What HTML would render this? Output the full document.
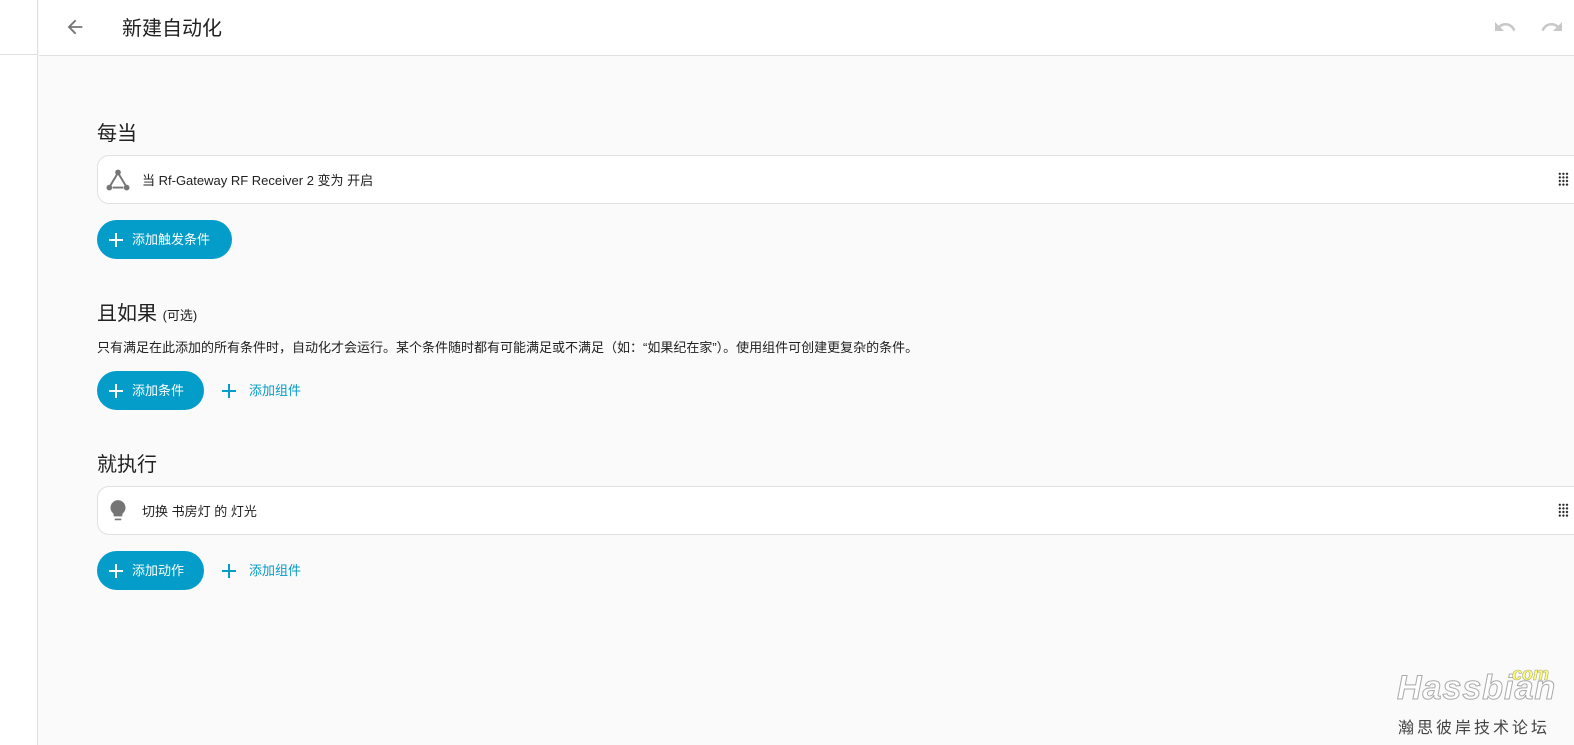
<!DOCTYPE html>
<html><head><meta charset="utf-8"><style>
*{box-sizing:border-box;margin:0;padding:0}
body{width:1574px;height:745px;overflow:hidden;background:#fafafa;font-family:"Liberation Sans","Noto Sans CJK SC",sans-serif;color:#212121;position:relative}
.side{position:absolute;left:0;top:0;width:38px;height:745px;background:#fff;border-right:1px solid #e0e0e0}
.side:after{content:"";position:absolute;left:0;top:54px;width:38px;height:1px;background:#e0e0e0}
.hdr{position:absolute;left:39px;top:0;right:0;height:56px;background:#fff;border-bottom:1px solid #e0e0e0}
.title{position:absolute;left:83px;top:12px;font-size:20px;color:#212121}
.h{position:absolute;left:97px;font-size:20px;color:#212121}
.h small{font-size:13px}
.card{position:absolute;left:97px;width:1490px;height:49px;background:#fff;border:1px solid #e0e0e0;border-radius:12px}
.card .t{position:absolute;left:44px;top:14px;font-size:13px;color:#212121}
.btn{position:absolute;left:97px;height:39px;border-radius:20px;background:#049cc8;color:#fff;font-size:13px;line-height:39px;padding-left:35px}
.btn:before,.lnk:before{content:"";position:absolute;left:12px;top:19px;width:14px;height:2px;background:currentColor}
.btn:after,.lnk:after{content:"";position:absolute;left:18px;top:13px;width:2px;height:14px;background:currentColor}
.lnk{position:absolute;color:#049cc8;font-size:13px;height:39px;line-height:39px;padding-left:27px}
.lnk:before{left:0}.lnk:after{left:6px}
.grip{position:absolute;right:17px;top:16px;width:11px;height:14px;background-image:radial-gradient(circle,#222 1px,transparent 1.3px);background-size:3.6px 3.6px}
</style></head><body>
<div class="side"></div>
<div class="hdr">
<svg style="position:absolute;left:25px;top:16px" width="22" height="22" viewBox="0 0 24 24"><path d="M20 11H7.8l5.6-5.6L12 4l-8 8 8 8 1.4-1.4L7.8 13H20z" fill="#757575"/></svg>
<div class="title">新建自动化</div>
<svg style="position:absolute;left:1454px;top:15px" width="24" height="24" viewBox="0 0 24 24"><path d="M12.5 8c-2.65 0-5.05 1-6.9 2.6L2 7v9h9l-3.6-3.6c1.4-1.2 3.2-1.9 5.1-1.9 3.5 0 6.5 2.3 7.6 5.5l2.4-.8C21.1 11 17.2 8 12.5 8z" fill="#c8c8c8"/></svg>
<svg style="position:absolute;left:1501px;top:15px" width="24" height="24" viewBox="0 0 24 24"><path d="M18.4 10.6C16.6 9 14.2 8 11.5 8c-4.7 0-8.6 3-10 7.2l2.4.8c1.1-3.2 4.1-5.5 7.6-5.5 2 0 3.7.7 5.1 1.9L13 16h9V7z" fill="#c8c8c8"/></svg>
</div>
<div class="h" style="top:117px">每当</div>
<div class="card" style="top:155px">
<svg style="position:absolute;left:7px;top:11px" width="26" height="26" viewBox="0 0 24 24"><g fill="#757575"><circle cx="12" cy="5" r="2.6"/><circle cx="4" cy="19" r="2.6"/><circle cx="20" cy="19" r="2.6"/></g><path d="M11 7l-6 10M13 7l6 10M7 19h10" stroke="#757575" stroke-width="1.8" fill="none"/></svg>
<div class="t">当 Rf-Gateway RF Receiver 2 变为 开启</div><div class="grip"></div></div>
<div class="btn" style="top:220px;width:135px">添加触发条件</div>
<div class="h" style="top:297px">且如果 <small>(可选)</small></div>
<div style="position:absolute;left:97px;top:337px;font-size:13px">只有满足在此添加的所有条件时，自动化才会运行。某个条件随时都有可能满足或不满足（如：“如果纪在家”）。使用组件可创建更复杂的条件。</div>
<div class="btn" style="top:371px;width:107px">添加条件</div>
<div class="lnk" style="left:222px;top:371px">添加组件</div>
<div class="h" style="top:448px">就执行</div>
<div class="card" style="top:486px">
<svg style="position:absolute;left:7px;top:11px" width="26" height="26" viewBox="0 0 24 24"><path d="M12 2a7 7 0 0 0-4 12.7V17h8v-2.3A7 7 0 0 0 12 2zM9 19v1.5h6V19z" fill="#757575"/></svg>
<div class="t">切换 书房灯 的 灯光</div><div class="grip"></div></div>
<div class="btn" style="top:551px;width:107px">添加动作</div>
<div class="lnk" style="left:222px;top:551px">添加组件</div>
<div style="position:absolute;left:1397px;top:669px;font-size:34px;font-style:italic;font-weight:bold;color:#fff;-webkit-text-stroke:1px #aaa;letter-spacing:1px">Hassbian</div>
<div style="position:absolute;left:1512px;top:664px;font-size:18px;font-style:italic;font-weight:bold;color:#ff6;-webkit-text-stroke:0.6px #aa9">com</div>
<div style="position:absolute;left:1398px;top:714px;font-size:16px;color:#444;letter-spacing:3px">瀚思彼岸技术论坛</div>
</body></html>
